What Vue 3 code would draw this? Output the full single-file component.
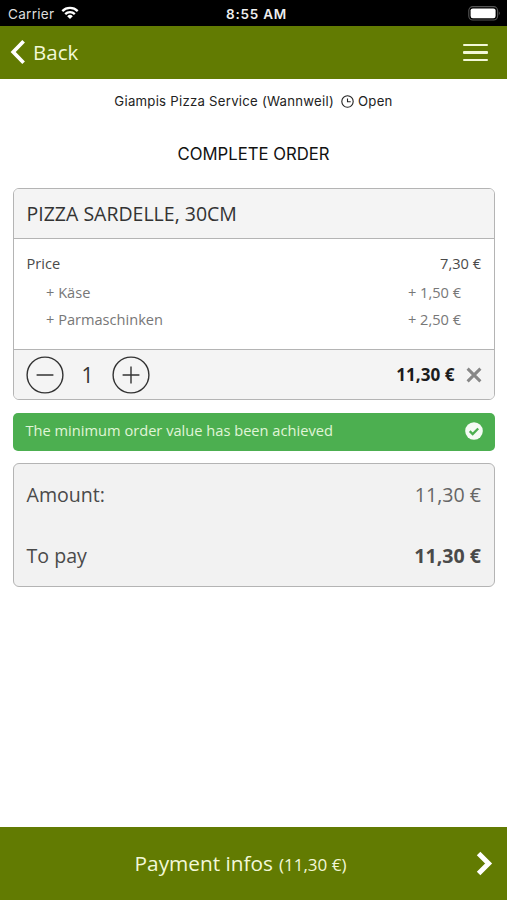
<script setup>
import { ref, computed } from 'vue'

const qty = ref(1)
const extras = [
  { name: 'Käse', price: '1,50 €' },
  { name: 'Parmaschinken', price: '2,50 €' },
]
const total = computed(() => `${(11.3 * qty.value).toFixed(2).replace('.', ',')} €`)
</script>

<template>
  <div class="screen">
    <div class="status">
      <div class="carrier">
        <span class="carrier-name">Carrier</span>
        <svg class="wifi" width="18" height="14" viewBox="0 0 18 14" fill="none" stroke="#fff" stroke-width="2.3">
          <path d="M1.3 5.1a11 11 0 0 1 15.4 0" />
          <path d="M4.2 8.1a6.8 6.8 0 0 1 9.6 0" />
          <path d="M6.2 10.2a4 4 0 0 1 5.6 0L9 13z" fill="#fff" stroke="none" />
        </svg>
      </div>
      <span class="time">8:55 AM</span>
      <svg class="battery" width="33" height="15" viewBox="0 0 33 15">
        <rect x="0.8" y="0.6" width="28.8" height="13.4" rx="4" fill="none" stroke="#555" stroke-width="1.1" />
        <rect x="2.6" y="2.4" width="25" height="9.8" rx="2.2" fill="#fff" />
        <path d="M30.9 5.2q1.8 2.1 0 4.2z" fill="#777" />
      </svg>
    </div>

    <header class="nav">
      <button class="back">
        <svg width="15" height="24" viewBox="0 0 15 24" fill="none" stroke="#fff" stroke-width="3.7">
          <path d="M13.6 1.3 3.2 12l10.4 10.7" />
        </svg>
        <span class="back-text">Back</span>
      </button>
      <button class="menu" aria-label="Menu"><i></i><i></i><i></i></button>
    </header>

    <main class="content">
      <div class="shop">
        <span class="shop-name">Giampis Pizza Service (Wannweil)</span>
        <svg width="13" height="13" viewBox="0 0 13 13" fill="none" stroke="#222" stroke-width="1.1">
          <circle cx="6.5" cy="6.5" r="5.7" />
          <path d="M6.5 3.4v3.3h3.2" />
        </svg>
        <span class="shop-open">Open</span>
      </div>
      <h1>COMPLETE ORDER</h1>

      <section class="card">
        <div class="card-head"><span class="item-name">PIZZA SARDELLE, 30CM</span></div>
        <div class="card-body">
          <div class="line"><span>Price</span><span>7,30 €</span></div>
          <div v-for="e in extras" :key="e.name" class="line extra">
            <span>+ {{ e.name }}</span><span>+ {{ e.price }}</span>
          </div>
        </div>
        <div class="card-foot">
          <button class="round" aria-label="Less" @click="qty = Math.max(1, qty - 1)">
            <svg width="38" height="38" viewBox="0 0 38 38" fill="none" stroke="#333" stroke-width="1.4">
              <circle cx="19" cy="19" r="17.9" /><path d="M10.6 19h16.8" />
            </svg>
          </button>
          <span class="qty">{{ qty }}</span>
          <button class="round" aria-label="More" @click="qty++">
            <svg width="38" height="38" viewBox="0 0 38 38" fill="none" stroke="#333" stroke-width="1.4">
              <circle cx="19" cy="19" r="17.9" /><path d="M10.6 19h16.8M19 10.6v16.8" />
            </svg>
          </button>
          <span class="sum">{{ total }}</span>
          <svg class="remove" width="16" height="16" viewBox="0 0 16 16" stroke="#888" stroke-width="3">
            <path d="M1.6 1.6l12.8 12.8M14.4 1.6L1.6 14.4" />
          </svg>
        </div>
      </section>

      <div class="notice">
        <span class="notice-text">The minimum order value has been achieved</span>
        <svg width="18" height="18" viewBox="0 0 18 18">
          <circle cx="9" cy="9" r="8.8" fill="#f5fbf5" />
          <path d="M4.7 9.1l3 3 5.5-5.6" fill="none" stroke="#4caf50" stroke-width="2.3" />
        </svg>
      </div>

      <section class="totals">
        <div class="total-row"><span>Amount:</span><span class="amount">{{ total }}</span></div>
        <div class="total-row"><span>To pay</span><b>{{ total }}</b></div>
      </section>
    </main>

    <footer class="pay">
      <div class="pay-label"><span class="pay-title">Payment infos</span><span class="pay-sum">({{ total }})</span></div>
      <svg width="17" height="25" viewBox="0 0 17 25" fill="none" stroke="#fff" stroke-width="5">
        <path d="M2.6 2.4l10 10.1-10 10.1" />
      </svg>
    </footer>
  </div>
</template>

<style>
body { background: #fff; }
</style>

<style scoped>
.screen { height: 900px; display: flex; flex-direction: column; font-family: "Open Sans", "Noto Sans", sans-serif; color: #4a4a4a; white-space: nowrap; }
button { background: none; border: 0; padding: 0; font: inherit; color: inherit; display: flex; align-items: center; }
svg { flex: none; display: block; }
.status { height: 26px; background: #000; color: #fff; display: grid; grid-template-columns: 1fr auto 1fr; align-items: center; padding: 0 6px 0 8px; font-family: Inter, sans-serif; flex: none; box-sizing: border-box; }
.carrier { display: flex; align-items: center; gap: 7px; color: #ddd; padding-top: 1px; }
.carrier-name { font-size: 13.6px; letter-spacing: .25px; }
.wifi { margin-top: -2px; }
.time { font-weight: 600; padding-top: 1px; font-size: 13.5px; letter-spacing: .75px; color: #eee; margin-left: 4px; }
.battery { justify-self: end; }
.nav { height: 53px; background: #627b02; color: #f2f8d8; display: flex; align-items: center; justify-content: space-between; padding: 0 19px 0 10px; flex: none; }
.back { gap: 8px; font-size: 20.5px; }
.back svg { margin-top: -1px; }
.back-text { margin-top: -1px; }
.menu { flex-direction: column; gap: 5px; }
.menu i { width: 25px; height: 2.5px; background: #f2f8d8; display: block; border-radius: 1px; }
.content { flex: 1; padding: 0 12.5px; display: flex; flex-direction: column; }
.shop { display: flex; justify-content: center; align-items: center; height: 20px; margin-top: 12px; font-family: Inter, sans-serif; font-size: 13.2px; letter-spacing: .25px; color: #222; }
.shop svg { margin: 0 4px 0 7px; }
h1 { margin: 31px 0 0; font: 400 16.7px/24px Inter, sans-serif; text-align: center; color: #111; }
.card, .totals { border: 1.5px solid #b4b4b4; border-radius: 6px; overflow: hidden; box-sizing: border-box; }
.card { margin-top: 22px; height: 212px; display: flex; flex-direction: column; }
.card-head { height: 49px; background: #f4f4f4; border-bottom: 1.5px solid #b4b4b4; display: flex; align-items: center; padding-left: 13px; color: #333; font-size: 19.5px; }
.card-body { flex: 1; padding: 11px 12.5px 0 13px; }
.line { display: flex; justify-content: space-between; font-size: 14.6px; line-height: 27px; }
.line.extra { padding: 0 20px 0 19.5px; color: #777; }
.line:first-child { margin-bottom: 2px; }
.card-foot { height: 49px; background: #f4f4f4; border-top: 1.5px solid #b4b4b4; display: flex; align-items: center; padding: 0 12px 0 12px; }
.qty { width: 48px; text-align: center; font-size: 21px; color: #333; }
.sum { margin-left: auto; font-weight: 700; font-size: 17.1px; color: #1c1c1c; }
.remove { margin-left: 11px; }
.notice { margin-top: 13px; height: 37.5px; border-radius: 5px; background: #4caf50; color: #e0f5d8; display: flex; align-items: center; justify-content: space-between; padding: 0 12px 0 13px; font-size: 14.65px; }
.notice-text { margin-top: -3px; }
.notice svg { margin-top: -1px; }
.totals { margin-top: 12px; height: 124.5px; background: #f2f2f2; padding: 0 12.5px 0 13px; }
.total-row { display: flex; justify-content: space-between; align-items: center; height: 61px; font-size: 19.6px; }
.amount { color: #666; }
.pay { height: 73px; flex: none; background: #627b02; color: #f2f8d8; display: flex; align-items: center; padding-right: 14px; }
.pay-label { flex: 1; display: flex; align-items: baseline; justify-content: center; gap: 6px; padding-left: 5px; margin-top: -2px; }
.pay-title { font-size: 20.8px; }
.pay-sum { font-size: 17px; }
</style>
